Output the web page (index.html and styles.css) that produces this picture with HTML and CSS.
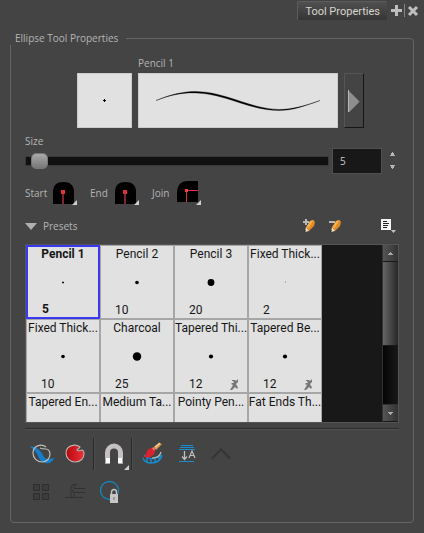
FILE: index.html
```html
<!DOCTYPE html>
<html lang="en">
<head>
<meta charset="utf-8">
<meta name="viewport" content="width=device-width, initial-scale=1">
<title>Tool Properties</title>
<link rel="stylesheet" href="styles.css">
</head>
<body>
<header class="tabbar">
  <button class="tab">Tool Properties</button>
  <button class="tab-action" aria-label="Add view"><svg width="12" height="12" viewBox="0 0 12 12"><path d="M5 0h3v4h4v3H8v4H5V7H1V4h4z" fill="#bdbdbd"/></svg></button>
  <span class="tab-divider"></span>
  <button class="tab-action" aria-label="Close view"><svg width="12" height="12" viewBox="0 0 12 12"><path d="M2 2l8 8M10 2L2 10" stroke="#c0c0c0" stroke-width="3"/></svg></button>
</header>

<fieldset class="panel">
  <legend>Ellipse Tool Properties</legend>

  <section class="preview">
    <span class="preview-name">Pencil 1</span>
    <div class="preview-tip"><svg width="7" height="7" viewBox="0 0 7 7"><path d="M3 2h1v1h1v1H4v1H3V4H2V3h1z"/></svg></div>
    <div class="preview-stroke">
      <svg width="166" height="24" viewBox="0 0 166 24"><path d="M1 11.500C17 5 28 2.500 41 2.500C70 2.500 95 20 124 20.500C137 20.500 149 17 165 11.500C149 17.500 137 21.500 124 21.500C94 21.500 70 4.500 41 4C28 3.500 17 5.500 1 11.500z" fill="#000" stroke="#000" stroke-width=".3"/></svg>
    </div>
    <button class="preview-more" aria-label="Show pencil editor"><svg width="14" height="26" viewBox="0 0 14 26"><path d="M1 2l11 11L1 24z" fill="#8e8e8e"/><path d="M1.500 2v22L12 13.500" fill="none" stroke="#b8b8b8"/></svg></button>
  </section>

  <section class="size">
    <label class="size-label" for="size">Size</label>
    <div class="size-row">
      <input class="slider" type="range" min="0" max="100" value="1" aria-label="Size slider">
      <input class="size-value" id="size" type="text" value="5">
      <span class="stepper">
        <button aria-label="Increase"><svg width="5" height="4" viewBox="0 0 5 4"><path d="M2 0h1v1h1v2h1v1H0V3h1V1h1z" fill="#b5b5b5"/></svg></button>
        <button aria-label="Decrease"><svg width="5" height="4" viewBox="0 0 5 4"><path d="M0 0h5v1H4v2H3v1H2V3H1V1H0z" fill="#b5b5b5"/></svg></button>
      </span>
    </div>
  </section>

  <section class="caps">
    <label class="cap" for="start">Start</label>
    <button class="cap-button" id="start" aria-label="Start cap"><svg width="25" height="24" viewBox="0 0 25 24"><path d="M0 23V11C0 4 4 1 10.500 1S21 4 21 11v12z"/><path d="M9 12h2v11H9z" fill="#7c2428"/><path d="M8 9h4v4H8z" fill="#e03338"/><path d="M24 19v5h-5z" fill="#d0d0d0"/></svg></button>
    <label class="cap" for="end">End</label>
    <button class="cap-button" id="end" aria-label="End cap"><svg width="25" height="24" viewBox="0 0 25 24"><path d="M0 23V11C0 4 4 1 10.500 1S21 4 21 11v12z"/><path d="M9 12h2v11H9z" fill="#7c2428"/><path d="M8 9h4v4H8z" fill="#e03338"/><path d="M24 19v5h-5z" fill="#d0d0d0"/></svg></button>
    <label class="cap" for="join">Join</label>
    <button class="cap-button" id="join" aria-label="Join style"><svg width="25" height="24" viewBox="0 0 25 24"><path d="M0 21v-9C0 4 4 0 11 0h10v21z"/><path d="M9.500 21V9.500H21" fill="none" stroke="#e03338"/><path d="M8 8h3v3H8z" fill="#f04045"/><path d="M24 19v5h-5z" fill="#d0d0d0"/></svg></button>
  </section>

  <section class="presets-head">
    <button class="presets-toggle"><svg width="12" height="7" viewBox="0 0 12 7"><path d="M0 0h12L6 7z" fill="#b0b0b0"/></svg>Presets</button>
    <button class="tool-icon" aria-label="New preset"><svg width="14" height="14" viewBox="0 0 14 14"><path d="M4 8L8.500 2l3-1L13 3l-1 4-5 5z" fill="#e18c26"/><path d="M8 2l3.500-1-5 8-2-1z" fill="#f7b052"/><path d="M4 8l3 4-4 1z" fill="#f5dfba"/><path d="M3 11l1 1-2 1z" fill="#222"/><path d="M3 0h2v2h2v2H5v2H3V4H1V2h2z" fill="#b9b9b9"/></svg></button>
    <button class="tool-icon" aria-label="Delete preset"><svg width="14" height="14" viewBox="0 0 14 14"><path d="M4 8L8.500 2l3-1L13 3l-1 4-5 5z" fill="#e18c26"/><path d="M8 2l3.500-1-5 8-2-1z" fill="#f7b052"/><path d="M4 8l3 4-4 1z" fill="#f5dfba"/><path d="M3 11l1 1-2 1z" fill="#222"/><path d="M1 2h6v2H1z" fill="#b9b9b9"/></svg></button>
    <button class="tool-icon menu" aria-label="Presets menu"><svg width="16" height="16" viewBox="0 0 16 16"><path d="M0 1h10v11H0z" fill="#f4f4f4"/><path d="M2 3.500h4M2 5.500h6M2 7.500h5M2 9.500h4" stroke="#222"/><path d="M10 12h5l-2.500 3z" fill="#c4c4c4"/></svg></button>
  </section>

  <div class="presets">
    <div class="preset-grid">
      <button class="preset selected"><span>Pencil 1</span><svg viewBox="0 0 12 12"><path d="M5.500 5h1v.500h.500v1h-.500V7h-1v-.500H5v-1h.500z"/></svg><span class="value">5</span></button>
      <button class="preset"><span>Pencil 2</span><svg viewBox="0 0 12 12"><circle cx="6" cy="6" r="2"/></svg><span class="value">10</span></button>
      <button class="preset"><span>Pencil 3</span><svg viewBox="0 0 12 12"><circle cx="6" cy="6" r="3.700"/></svg><span class="value">20</span></button>
      <button class="preset"><span>Fixed Thick...</span><svg viewBox="0 0 12 12"><path d="M6 5h1v1H6z" fill="#777"/></svg><span class="value">2</span></button>
      <button class="preset"><span>Fixed Thick...</span><svg viewBox="0 0 12 12"><circle cx="6" cy="6" r="2"/></svg><span class="value">10</span></button>
      <button class="preset"><span>Charcoal</span><svg viewBox="0 0 12 12"><circle cx="6" cy="6" r="4.600"/></svg><span class="value">25</span></button>
      <button class="preset"><span>Tapered Thi...</span><svg viewBox="0 0 12 12"><circle cx="6" cy="6" r="2.300"/></svg><span class="value">12<svg class="textured" viewBox="0 0 9 11"><path d="M2 1h3l1 1 2-2v3L6 5l1 2 1 1-1 2-2-2-3 3H0l3-5-2-1 1-1h2L3 2H2z" fill="#777"/></svg></span></button>
      <button class="preset"><span>Tapered Be...</span><svg viewBox="0 0 12 12"><circle cx="6" cy="6" r="2.300"/></svg><span class="value">12<svg class="textured" viewBox="0 0 9 11"><path d="M2 1h3l1 1 2-2v3L6 5l1 2 1 1-1 2-2-2-3 3H0l3-5-2-1 1-1h2L3 2H2z" fill="#777"/></svg></span></button>
      <button class="preset"><span>Tapered En...</span></button>
      <button class="preset"><span>Medium Ta...</span></button>
      <button class="preset"><span>Pointy Pen...</span></button>
      <button class="preset"><span>Fat Ends Th...</span></button>
    </div>
    <div class="scrollbar">
      <button class="scroll-end" aria-label="Scroll up"><svg width="5" height="3" viewBox="0 0 5 3"><path d="M2 0h1v1h1v1h1v1H0V2h1V1h1z" fill="#aaa"/></svg></button>
      <div class="scroll-thumb"></div>
      <div class="scroll-track"></div>
      <button class="scroll-end" aria-label="Scroll down"><svg width="5" height="3" viewBox="0 0 5 3"><path d="M0 0h5v1H4v1H3v1H2V2H1V1H0z" fill="#aaa"/></svg></button>
    </div>
  </div>

  <hr class="rule">

  <div class="toolbar">
    <button aria-label="Draw behind"><svg viewBox="0 0 32 32"><path d="M5 9c3-1 6 0 8 2 3 2 5 6 6 8 2 3 5 2 10 1-1 4-5 6-9 5-4-1-6-4-7-7-2-4-3-6-8-9z" fill="#157fcb"/><path d="M21 9c-5-4-13-1-13 6 0 5 4 9 9 9 5 0 8-4 8-8 0-3-2-5-4-5s-4 0-6-1" fill="none" stroke="#c0bcb6" stroke-width="1.200"/></svg></button>
    <button aria-label="Auto-fill"><svg viewBox="0 0 32 32"><defs><linearGradient id="fillRed"><stop stop-color="#b40810"/><stop offset="1" stop-color="#ee3038"/></linearGradient></defs><path d="M21 9c-5-4-14-1-14 6 0 5 4 9 9 9 6 0 9-4 9-8 0-3-1-4-2-4-2 1-5 1-5 0s2-1 3-3z" fill="url(#fillRed)" stroke="#b9b3af" stroke-width="1.100"/></svg></button>
    <span class="divider"></span>
    <button aria-label="Snap options"><svg viewBox="0 0 32 32"><path d="M10.500 20v-5.500a6.500 6.500 0 0 1 13 0V20" fill="none" stroke="#c5c1c1" stroke-width="5"/><path d="M8 20h5v6H8zM21 20h5v6h-5z" fill="#aaa"/><path d="M9 20h4v5H9zM21 20h4v5h-4z" fill="#fff"/><path d="M32 27v5h-5z" fill="#d0d0d0"/></svg></button>
    <span class="divider"></span>
    <button aria-label="Draw on surface"><svg viewBox="0 0 32 32"><path d="M8 20c1 3 4 5 8 5 6 0 10-3 11-8M9 17c5 5 12 4 18 0M12 20v4M16 21v4M20 20v4M24 18v4" fill="none" stroke="#158bd0" stroke-width="1.400"/><path d="M17 20c5 0 8-2 9-6" fill="none" stroke="#bcbcbc" stroke-width="1.200"/><path d="M8 18c3 0 3-2 4-5 2-3 5-4 7-2s1 5-2 7-6 2-9 0z" fill="#d8232c"/><path d="M17 10l2-1 1 2-1 2z" fill="#f0787c"/><path d="M19 9l5-4 3 1-6 6z" fill="#e39a4a"/><path d="M20 9l5-4" stroke="#fad69c" stroke-width="1.300"/></svg></button>
    <button aria-label="Line thickness alignment"><svg viewBox="0 0 32 32"><path d="M12 7.500h12M11 9.500h14M10 11.500h16M10 23.500h15" stroke="#198cd2"/><path d="M15.500 13v8M13 18.500l2.500 3 2.500-3" fill="none" stroke="#bebebe" stroke-width="1.300"/><path d="M20 20l3-7 3 7M21 17.500h4" fill="none" stroke="#bebebe" stroke-width="1.200"/></svg></button>
    <button aria-label="Create polyline" disabled><svg viewBox="0 0 32 32"><path d="M9 20.500l9-9 9 9" fill="none" stroke="#343434" stroke-width="2"/></svg></button>
  </div>
  <div class="toolbar">
    <button aria-label="Group" disabled><svg viewBox="0 0 32 32"><path d="M8.500 8.500h6v6h-6zM17.500 8.500h6v6h-6zM8.500 17.500h6v6h-6zM17.500 17.500h6v6h-6z" fill="#3c3c3c" stroke="#2e2e2e"/></svg></button>
    <button aria-label="Flatten" disabled><svg viewBox="0 0 32 32"><path d="M14 8.500h4c-3 1-3 2-3 4h11M26 16.500H15v5h-3v-8M11 13l3-5M6 21.500h18" fill="none" stroke="#303030"/><path d="M12 13.500h3v3h-3z" fill="#383838"/></svg></button>
    <button aria-label="Respect protected colours"><svg viewBox="0 0 32 32"><circle cx="16.500" cy="14.500" r="9" fill="none" stroke="#1686bd" stroke-width="1.300"/><path d="M17 18h8v9h-8z" fill="#c6c6c6"/><path d="M18.500 18v-1.500c0-4 5-4 5 0V18" fill="none" stroke="#c6c6c6" stroke-width="1.400"/><path d="M20 21h2v3h-2z" fill="#999"/></svg></button>
  </div>
</fieldset>
</body>
</html>
```

FILE: styles.css
```css
* { box-sizing: border-box; }

body {
  margin: 0;
  background: #444;
  color: #b4b4b4;
  font: 10px/14px "Open Sans", "Noto Sans", sans-serif;
}

button {
  margin: 0;
  padding: 0;
  border: 0;
  background: none;
  color: inherit;
  font: inherit;
}

svg { display: block; }

.tabbar {
  display: flex;
  align-items: center;
  justify-content: flex-end;
  gap: 3px;
  height: 20px;
  padding: 1px 5px 0 0;
}

.tab {
  height: 19px;
  padding: 0 7px;
  border: 1px solid #5c5c5c;
  border-width: 1px 0 0 1px;
  border-radius: 2px 2px 0 0;
  background: linear-gradient(#505050, #353535);
  color: #d6d6ca;
  font: 11px/20px Roboto, "Open Sans", sans-serif;
}

.tab-action { width: 12px; }

.tab-divider {
  width: 1px;
  height: 13px;
  margin: 0 -1px;
  background: #858585;
}

.panel {
  min-width: 0;
  margin: 11px 10px 10px;
  padding: 11px 14px 14px;
  border: 1px solid #666;
  border-radius: 4px;
}

.panel legend {
  margin-left: -15px;
  padding: 0 8px 0 5px;
  background: #444;
}

.preview {
  display: grid;
  grid-template-columns: 55px 1fr 20px;
  gap: 3px 6px;
  padding: 0 35px 0 52px;
}

.preview-name { grid-column: 2 / 4; }

.preview-tip,
.preview-stroke {
  display: flex;
  align-items: center;
  justify-content: center;
  height: 55px;
  border: 1px solid #ccc;
  background: #e1e1e1;
}

.preview-more {
  display: flex;
  align-items: center;
  justify-content: center;
  border: 1px solid #555;
  border-right-color: #161616;
  border-bottom-color: #161616;
}

.size { padding-top: 6px; }

.size-label { display: block; }

.size-row {
  display: flex;
  align-items: center;
  gap: 3px;
  height: 25px;
}

.slider {
  flex: 1;
  min-width: 0;
  height: 16px;
  margin: 0;
  appearance: none;
  background: none;
}

.slider::-webkit-slider-runnable-track {
  height: 10px;
  padding: 0 2px;
  border: 1px solid #393939;
  background: #111;
}

.slider::-webkit-slider-thumb {
  width: 17px;
  height: 16px;
  margin-top: -4px;
  appearance: none;
  border: 1px solid #777;
  border-radius: 5px;
  background: linear-gradient(#aaa, #777);
}

.size-value {
  width: 50px;
  height: 26px;
  padding: 0 7px;
  border: 1px solid #505050;
  border-radius: 0;
  background: #181818;
  color: #c8c8c8;
  font: inherit;
}

.stepper {
  display: flex;
  flex-direction: column;
  align-items: center;
  gap: 9px;
  width: 14px;
}

.caps {
  display: flex;
  align-items: center;
  height: 24px;
  margin-top: 8px;
}

.cap { width: 28px; }

.cap-button + .cap { width: 25px; }

.cap-button { margin-right: 12px; }

.presets-head {
  display: flex;
  align-items: center;
  gap: 12px;
  height: 16px;
  margin: 13px 0 10px;
}

.presets-toggle {
  display: flex;
  align-items: center;
  gap: 6px;
  margin-right: auto;
}

.tool-icon.menu { margin: 0 2px 0 27px; }

.presets {
  display: flex;
  justify-content: space-between;
  height: 179px;
  border: 1px solid #555;
  background: #181818;
}

.preset-grid {
  display: grid;
  grid-template-columns: repeat(4, 74px);
  grid-auto-rows: 74px;
  overflow: hidden;
}

.preset {
  display: flex;
  flex-direction: column;
  align-items: center;
  overflow: hidden;
  border: 1px solid #a6a6a6;
  background: #e1e1e1;
  color: #161616;
  font: 12px/16px Roboto, "Open Sans", sans-serif;
  white-space: nowrap;
}

.preset > svg {
  width: 12px;
  height: 12px;
  margin: 15px 0 14px;
}

.preset .value {
  display: flex;
  align-items: center;
  justify-content: space-between;
  align-self: stretch;
  padding: 0 8px 0 14px;
}

.textured {
  width: 9px;
  height: 11px;
}

.preset.selected {
  border: 2px solid #3939f5;
  font-weight: 700;
}

.preset.selected > span { margin-top: -1px; }

.scrollbar {
  display: flex;
  flex-direction: column;
  width: 16px;
  border-left: 1px solid #333;
}

.scroll-end {
  display: flex;
  align-items: center;
  justify-content: center;
  height: 17px;
  border-bottom: 1px solid #181818;
  background: linear-gradient(90deg, #555, #333);
}

.scroll-thumb {
  flex: 84;
  background: linear-gradient(90deg, #666, #272727);
  border-bottom: 1px solid #181818;
}

.scroll-track {
  flex: 59;
  border-bottom: 1px solid #333;
  background: linear-gradient(90deg, #050505, #181818);
}

.rule {
  height: 2px;
  margin: 5px 0 8px;
  border: 0;
  border-top: 1px solid #2c2c2c;
  border-bottom: 1px solid #505050;
}

.toolbar {
  display: flex;
  gap: 2px;
}

.toolbar + .toolbar { margin-top: 6px; }

.toolbar svg {
  width: 32px;
  height: 32px;
}

.divider {
  width: 2px;
  border-left: 1px solid #292929;
  border-right: 1px solid #4e4e4e;
}
```
